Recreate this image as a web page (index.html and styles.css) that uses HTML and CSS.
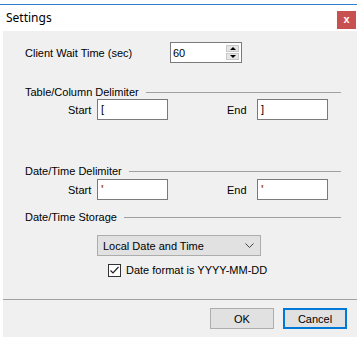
FILE: index.html
```html
<!DOCTYPE html>
<html lang="en">
<head>
  <meta charset="UTF-8" />
  <title>Settings</title>
  <link rel="stylesheet" href="styles.css">
</head>
<body>

<div class="dialog">
  <div class="titlebar">
    <span class="title">Settings</span>
    <span class="close">x</span>
  </div>

  <div class="content">
    <div class="wait-row">
      <span class="wait-label">Client Wait Time (sec)</span>
      <div class="spin">
        <span class="spin-value">60</span>
        <div class="spin-buttons">
          <span class="spin-btn"><span class="arrow-up"></span></span>
          <span class="spin-btn"><span class="arrow-down"></span></span>
        </div>
      </div>
    </div>

    <div class="group-head table-head">
      <span>Table/Column Delimiter</span>
      <div class="rule"></div>
    </div>
    <div class="pair-row">
      <span class="pair-label start">Start</span>
      <div class="textbox">[</div>
      <span class="pair-label end">End</span>
      <div class="textbox">]</div>
    </div>

    <div class="group-head date-head">
      <span>Date/Time Delimiter</span>
      <div class="rule"></div>
    </div>
    <div class="pair-row">
      <span class="pair-label start">Start</span>
      <div class="textbox quote">'</div>
      <span class="pair-label end">End</span>
      <div class="textbox quote">'</div>
    </div>

    <div class="group-head storage-head">
      <span>Date/Time Storage</span>
      <div class="rule"></div>
    </div>
    <div class="select">
      <span>Local Date and Time</span>
      <svg class="chevron" width="9" height="6" viewBox="0 0 9 6">
        <polyline points="0.5,0.5 4.5,4.5 8.5,0.5" fill="none" stroke="#444" stroke-width="1"/>
      </svg>
    </div>
    <div class="check-row">
      <span class="checkbox">
        <svg width="11" height="11" viewBox="0 0 11 11">
          <polyline points="1.5,5.5 4,8 9.5,2" fill="none" stroke="#222" stroke-width="1.2"/>
        </svg>
      </span>
      <span>Date format is YYYY-MM-DD</span>
    </div>

    <div class="separator"></div>
    <div class="buttons">
      <span class="btn">OK</span>
      <span class="btn default">Cancel</span>
    </div>
  </div>
</div>

</body>
</html>
```

FILE: styles.css
```css
body {
  margin: 0;
  background: #fff;
  font-family: "Liberation Sans", Arial, sans-serif;
  font-size: 11px;
  color: #000;
}
.dialog {
  width: 357px;
  margin-top: 4px;
  border-top: 1px solid #2f7fcc;
  background: #fff;
}
.titlebar {
  height: 26px;
  display: flex;
  align-items: center;
  justify-content: space-between;
  padding-left: 6px;
}
.title {
  font-family: "Noto Sans", "Open Sans", sans-serif;
  font-size: 12px;
  margin-top: -1px;
}
.close {
  width: 19px;
  height: 18px;
  margin-right: 1px;
  margin-top: 3px;
  background: #c75050;
  color: #fff;
  font-weight: bold;
  font-size: 11px;
  display: flex;
  align-items: center;
  justify-content: center;
  line-height: 1;
}
.content {
  background: #f0f0f0;
  margin-left: 3px;
  height: 306px;
  padding-top: 11px;
  box-sizing: border-box;
}
.wait-row {
  display: flex;
  align-items: center;
  height: 21px;
  padding-left: 22px;
}
.wait-label {
  width: 145px;
}
.spin {
  width: 72px;
  height: 21px;
  box-sizing: border-box;
  border: 1px solid #7a7a7a;
  background: #fff;
  display: flex;
  align-items: center;
  justify-content: space-between;
}
.spin-value {
  padding-left: 2px;
}
.spin-buttons {
  display: flex;
  flex-direction: column;
  gap: 1px;
  margin-right: 2px;
}
.spin-btn {
  width: 13px;
  height: 7px;
  background: #e6e6e6;
  border: 1px solid #c8c8c8;
  box-sizing: border-box;
  display: flex;
  align-items: center;
  justify-content: center;
}
.arrow-up, .arrow-down {
  width: 0;
  height: 0;
  border-left: 3px solid transparent;
  border-right: 3px solid transparent;
}
.arrow-up {
  border-bottom: 3px solid #000;
}
.arrow-down {
  border-top: 3px solid #000;
}
.group-head {
  display: flex;
  align-items: center;
  height: 14px;
  line-height: 14px;
  padding-left: 22px;
  padding-right: 16px;
  gap: 7px;
}
.rule {
  flex: 1;
  border-top: 1px solid #a0a0a0;
}
.table-head {
  margin-top: 22px;
}
.date-head {
  margin-top: 44px;
  margin-bottom: 1px;
}
.storage-head {
  margin-top: 10px;
}
.pair-row {
  display: flex;
  align-items: center;
  height: 21px;
}
.pair-label.start {
  margin-left: 65px;
  width: 29px;
}
.pair-label.end {
  margin-left: 59px;
  width: 30px;
}
.textbox {
  width: 71px;
  height: 21px;
  box-sizing: border-box;
  border: 1px solid #7a7a7a;
  background: #fff;
  padding-left: 3px;
  line-height: 19px;
}
.quote {
  color: #a04f00;
  font-weight: bold;
}
.select {
  margin-top: 11px;
  margin-left: 94px;
  width: 164px;
  height: 21px;
  box-sizing: border-box;
  border: 1px solid #adadad;
  background: #e1e1e1;
  display: flex;
  align-items: center;
  justify-content: space-between;
  padding: 0 6px 0 5px;
}
.check-row {
  display: flex;
  align-items: center;
  gap: 5px;
  margin-top: 7px;
  margin-left: 105px;
  height: 14px;
}
.checkbox {
  width: 13px;
  height: 13px;
  box-sizing: border-box;
  border: 1px solid #333;
  background: #fff;
  display: flex;
  align-items: center;
  justify-content: center;
}
.separator {
  margin-top: 22px;
  border-top: 1px solid #a0a0a0;
}
.buttons {
  display: flex;
  justify-content: flex-end;
  gap: 9px;
  margin-top: 8px;
  padding-right: 10px;
}
.btn {
  width: 64px;
  height: 21px;
  box-sizing: border-box;
  border: 1px solid #adadad;
  background: #e1e1e1;
  display: flex;
  align-items: center;
  justify-content: center;
}
.btn.default {
  border: 2px solid #0078d7;
}
```
